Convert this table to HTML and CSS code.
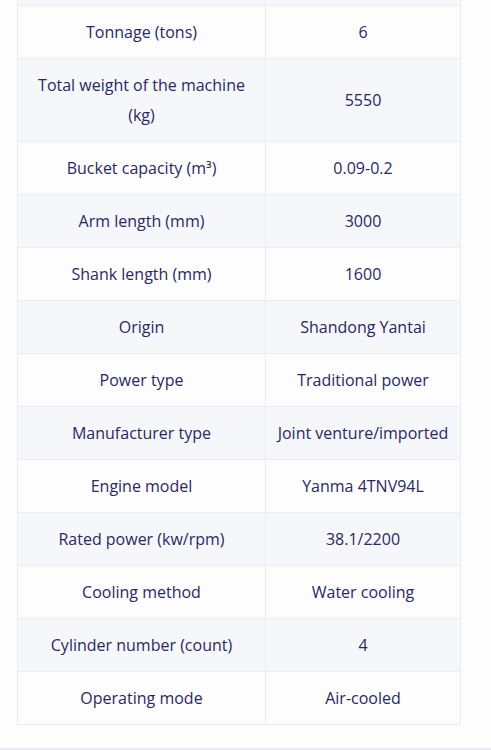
FILE: index.html
```html
<!DOCTYPE html>
<html lang="en">
<head>
<meta charset="utf-8">
<link rel="stylesheet" href="styles.css">
</head>
<body>
<section class="specs">
  <table class="spec-table">
    <colgroup>
      <col class="col-label">
      <col class="col-value">
    </colgroup>
    <tbody>
      <tr class="row-cut"><td></td><td></td></tr>
      <tr><td>Tonnage (tons)</td><td>6</td></tr>
      <tr><td>Total weight of the machine (kg)</td><td>5550</td></tr>
      <tr><td>Bucket capacity (m³)</td><td>0.09-0.2</td></tr>
      <tr><td>Arm length (mm)</td><td>3000</td></tr>
      <tr><td>Shank length (mm)</td><td>1600</td></tr>
      <tr><td>Origin</td><td>Shandong Yantai</td></tr>
      <tr><td>Power type</td><td>Traditional power</td></tr>
      <tr><td>Manufacturer type</td><td>Joint venture/imported</td></tr>
      <tr><td>Engine model</td><td>Yanma 4TNV94L</td></tr>
      <tr><td>Rated power (kw/rpm)</td><td>38.1/2200</td></tr>
      <tr><td>Cooling method</td><td>Water cooling</td></tr>
      <tr><td>Cylinder number (count)</td><td>4</td></tr>
      <tr><td>Operating mode</td><td>Air-cooled</td></tr>
    </tbody>
  </table>
</section>
<div class="next-band"></div>
</body>
</html>
```
FILE: styles.css
```css
html, body {
  margin: 0;
  padding: 0;
  background: #fdfdfe;
}
body {
  font-family: "Open Sans", "Noto Sans", sans-serif;
  color: #2b2860;
}
.specs {
  padding: 0 30px 23px 17px;
}
.spec-table {
  width: 443px;
  border-collapse: collapse;
  table-layout: fixed;
}
.col-label {
  width: 248px;
}
.col-value {
  width: 195px;
}
.spec-table td {
  border: 1px solid #ececf0;
  text-align: center;
  vertical-align: middle;
  font-size: 16px;
  line-height: 30px;
  padding: 11px 8px;
}
.spec-table tr:nth-child(odd) td {
  background: #f6f7fb;
}
.spec-table tr:nth-child(even) td {
  background: #fdfdfe;
}
.spec-table tr.row-cut td {
  border-top: 0;
  padding: 0;
  height: 5px;
  line-height: 5px;
}
.next-band {
  height: 10px;
  background: #ebeaf6;
}
```
